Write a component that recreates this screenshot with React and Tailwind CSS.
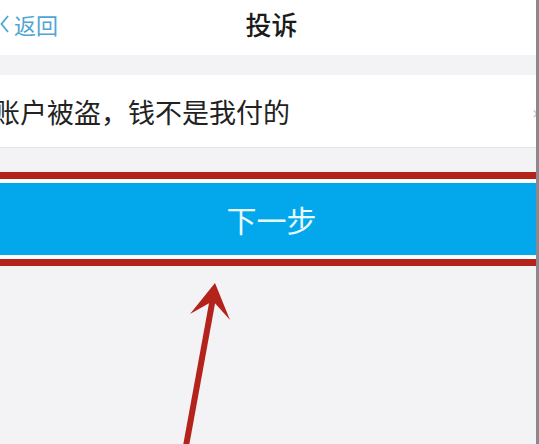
import React from "react";

const Arrow = () => (
  <svg
    className="absolute left-0 top-0 pointer-events-none"
    width="539"
    height="444"
    viewBox="0 0 539 444"
  >
    <line x1="186" y1="446" x2="213" y2="298" stroke="#b3231b" strokeWidth="6" />
    <polygon points="215,283 230,320 213,301 190,314" fill="#b3231b" />
  </svg>
);

const App = () => {
  return (
    <div
      className="relative w-[539px] h-[444px] overflow-hidden bg-[#f3f3f5] flex flex-col"
      style={{ fontFamily: '"Noto Sans CJK SC", "Noto Sans", sans-serif' }}
    >
      {/* nav bar */}
      <div className="h-[55px] bg-white grid grid-cols-3 items-center pb-[7px] shrink-0">
        <div className="flex items-center gap-[5px] text-[#4fa6d3] text-[22px] leading-none">
          <svg width="9" height="18" viewBox="0 0 9 18" className="shrink-0">
            <polyline points="8,1 1.5,9 8,17" fill="none" stroke="#4fa6d3" strokeWidth="1.8" />
          </svg>
          <span>返回</span>
        </div>
        <div className="text-center text-[26px] font-medium text-[#1b1b1b] leading-none pl-[4px]">
          投诉
        </div>
        <div />
      </div>

      <div className="h-[20px] shrink-0" />

      {/* reason row */}
      <div className="h-[73px] bg-white border-b border-[#e4e4e8] flex items-center justify-between shrink-0">
        <span className="-ml-[7px] text-[27px] text-[#222] leading-none whitespace-nowrap">
          账户被盗，钱不是我付的
        </span>
        <span className="text-[#bbb] text-[18px] mr-[1px]">›</span>
      </div>

      <div className="h-[24px] shrink-0" />

      {/* highlighted button */}
      <div className="border-y-[7px] border-[#b3231b] bg-white py-[4px] shrink-0">
        <button className="w-full h-[72px] bg-[#02a7ec] text-[#e9fbff] text-[30px] font-normal leading-none flex items-center justify-center pl-[4px]">
          下一步
        </button>
      </div>

      <div className="absolute right-0 top-0 w-[3px] h-full bg-[#8a8a8e]" />
      <Arrow />
    </div>
  );
};

export default App;
